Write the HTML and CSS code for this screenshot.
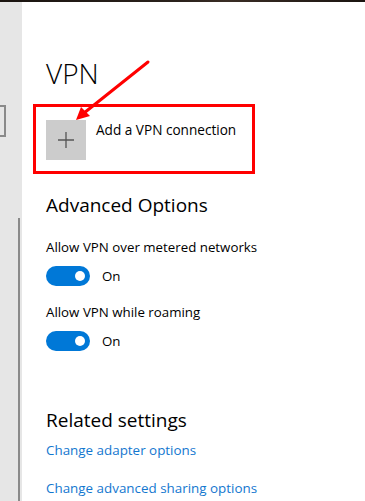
FILE: index.html
```html
<!DOCTYPE html>
<html>
<head>
<meta charset="utf-8">
<link rel="stylesheet" href="styles.css">
</head>
<body>
<div class="topbar"></div>
<div class="window">
  <aside class="sidebar">
    <div class="side-box"></div>
    <div class="scroll-line"></div>
  </aside>
  <main class="main">
    <h1 class="page-title">VPN</h1>
    <div class="highlight">
      <div class="add-tile">
        <svg width="18" height="18" viewBox="0 0 18 18"><path d="M9 1v16M1 9h16" stroke="#555" stroke-width="1.3" fill="none"/></svg>
      </div>
      <div class="add-label">Add a VPN connection</div>
    </div>
    <h2 class="section-title">Advanced Options</h2>
    <div class="setting">
      <div class="setting-label">Allow VPN over metered networks</div>
      <div class="toggle-row"><span class="toggle"><span class="knob"></span></span><span class="toggle-text">On</span></div>
    </div>
    <div class="setting second-setting">
      <div class="setting-label">Allow VPN while roaming</div>
      <div class="toggle-row"><span class="toggle"><span class="knob"></span></span><span class="toggle-text">On</span></div>
    </div>
    <h2 class="section-title related">Related settings</h2>
    <a class="link">Change adapter options</a>
    <a class="link second">Change advanced sharing options</a>
  </main>
  <svg class="arrow" width="365" height="501" viewBox="0 0 365 501">
    <line x1="148" y1="62" x2="84" y2="113" stroke="#f00" stroke-width="3" stroke-linecap="round"/>
    <polygon points="76,120 81,107 90,116" fill="#f00"/>
  </svg>
</div>
</body>
</html>
```
FILE: styles.css
```css
* { box-sizing: border-box; }
html, body { margin: 0; padding: 0; }
body {
  width: 365px;
  height: 501px;
  overflow: hidden;
  background: #fff;
  font-family: "Open Sans", "Noto Sans", sans-serif;
  color: #000;
}
.topbar {
  height: 2px;
  background: linear-gradient(90deg, #1a1410, #2b221c 50%, #3a2d25 62%, #1a1410);
}
.window {
  display: flex;
  height: 499px;
  position: relative;
}
.sidebar {
  width: 22px;
  flex: none;
  background: #e6e6e6;
  display: flex;
  flex-direction: column;
  align-items: flex-end;
}
.side-box {
  width: 30px;
  height: 32px;
  margin-top: 103px;
  margin-right: 16px;
  border: 2px solid #8a8a8a;
}
.scroll-line {
  width: 2px;
  flex: 1;
  margin-top: 81px;
  margin-right: 2px;
  background: #8a8a8a;
}
.main {
  flex: 1;
  padding-left: 24px;
  display: flex;
  flex-direction: column;
  align-items: flex-start;
}
.page-title {
  margin: 53px 0 0;
  font-size: 28px;
  font-weight: 300;
  line-height: 36px;
}
.highlight {
  margin: 13px 0 0 -13px;
  width: 222px;
  height: 70px;
  border: 3px solid #f00;
  display: flex;
  align-items: flex-start;
  padding: 13px 0 0 10px;
  gap: 10px;
}
.add-tile {
  width: 40px;
  height: 40px;
  background: #cccccc;
  display: flex;
  align-items: center;
  justify-content: center;
}
.add-label {
  font-size: 13.6px;
  line-height: 18px;
  margin-top: 1px;
}
.section-title {
  margin: 17px 0 0;
  font-size: 19px;
  font-weight: 400;
  line-height: 28px;
}
.setting {
  display: flex;
  flex-direction: column;
}
.setting-label {
  margin-top: 19px;
  font-size: 13.3px;
  line-height: 18px;
}
.second-setting .setting-label {
  margin-top: 17px;
}
.toggle-row {
  display: flex;
  align-items: center;
  height: 20px;
  margin-top: 10px;
  gap: 12px;
}
.toggle {
  width: 44px;
  height: 20px;
  border-radius: 10px;
  background: #0078d7;
  display: flex;
  align-items: center;
  justify-content: flex-end;
  padding-right: 5px;
}
.knob {
  width: 10px;
  height: 10px;
  border-radius: 50%;
  background: #fff;
}
.toggle-text {
  font-size: 13.3px;
  line-height: 18px;
}
.related {
  margin-top: 55px;
}
.link {
  font-size: 13.4px;
  line-height: 18px;
  color: #1377cf;
  margin-top: 7px;
}
.link.second {
  margin-top: 20px;
}
.arrow {
  position: absolute;
  left: 0;
  top: -2px;
  pointer-events: none;
}
```
